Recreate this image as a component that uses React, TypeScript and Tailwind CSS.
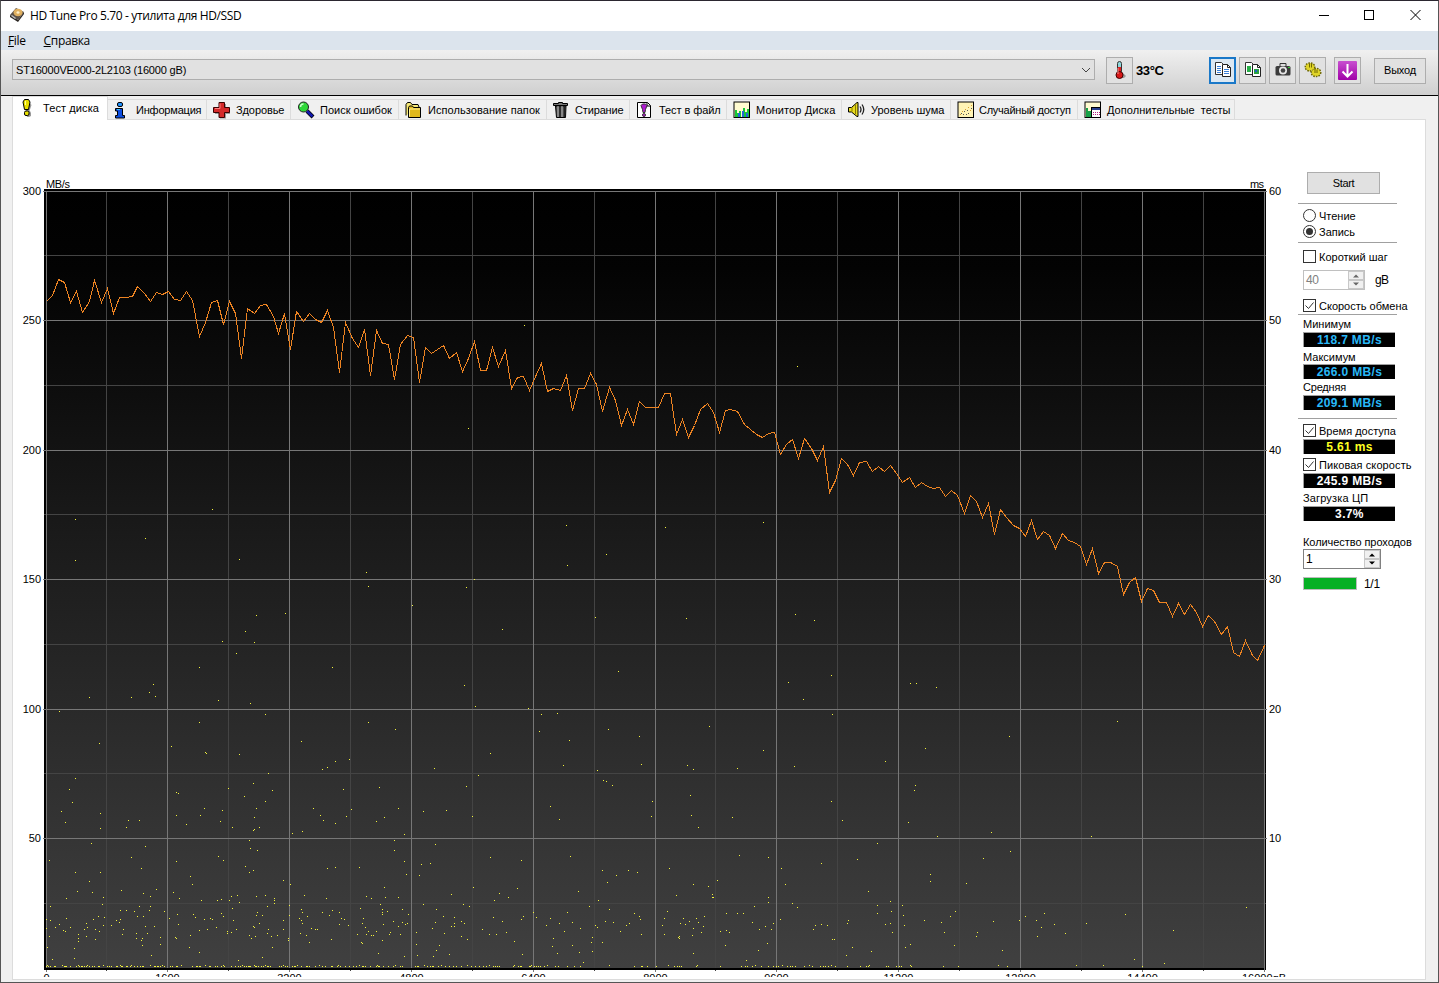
import type { ReactNode } from 'react';

type Point = [number, number];

// Samples are stored as flat x,y lists in thirds of a pixel, relative to a tile origin.
function tile(ox: number, oy: number, raw: number[]): Point[] {
  const points: Point[] = [];
  for (let i = 0; i < raw.length; i += 2) {
    points.push([ox + Math.floor(raw[i] / 3), oy + Math.floor(raw[i + 1] / 3)]);
  }
  return points;
}

const speed: Point[] = [
  ...tile(0, 170, [
    138, 394, 158, 376, 176, 328, 194, 337, 212, 397, 229, 365, 248, 428, 267, 394, 284, 331, 304, 397, 321, 356, 341,
    430, 358, 382, 378, 382, 396, 379, 412, 349, 432, 369, 451, 394, 469, 368, 487, 373, 504, 365, 522, 387, 541, 391,
    559, 365, 578, 391, 598, 498, 617, 457, 634, 398, 652, 391, 670, 463, 687, 395, 706, 431, 724, 565, 742, 416, 763,
    430, 781, 407, 799, 403, 819, 440, 836, 490, 853, 431, 871, 539, 889, 425, 911, 454, 928, 431, 947, 448, 965, 457,
    983, 421, 1000, 472, 1018, 606, 1037, 458, 1057, 505, 1075, 532, 1093, 479, 1111, 616, 1129, 482, 1147, 519, 1165,
    523, 1184, 628, 1202, 523, 1222, 496, 1240, 503,
  ]),
  ...tile(400, 310, [
    58, 217, 77, 113, 95, 130, 112, 118, 130, 107, 149, 144, 170, 127, 187, 184, 206, 145, 223, 95, 242, 181, 260, 181,
    278, 113, 295, 169, 316, 122, 335, 235, 351, 203, 370, 199, 389, 241, 406, 200, 424, 161, 443, 244, 461, 235, 481,
    241, 499, 197, 518, 301, 535, 235, 554, 235, 571, 190, 590, 223, 608, 304, 629, 232, 647, 271, 665, 346, 682, 298,
    701, 343, 718, 275, 736, 292, 775, 292, 793, 250, 811, 250, 830, 373, 848, 328, 866, 382, 884, 346, 902, 297, 923,
    280, 941, 308, 958, 367, 976, 302, 992, 297, 1012, 304, 1032, 344, 1068, 373, 1087, 382, 1105, 371, 1123, 367, 1141,
    433, 1159, 403, 1177, 388, 1195, 444, 1214, 385, 1233, 416, 1252, 450,
  ]),
  ...tile(820, 430, [
    10, 49, 29, 187, 46, 150, 64, 86, 82, 103, 100, 136, 119, 98, 139, 94, 157, 124, 175, 110, 193, 124, 211, 107, 230,
    130, 248, 157, 268, 143, 287, 172, 305, 157, 323, 169, 341, 175, 359, 172, 377, 199, 394, 181, 413, 196, 433, 250,
    451, 197, 469, 214, 487, 262, 505, 220, 523, 313, 541, 238, 560, 262, 580, 286, 598, 295, 616, 319, 634, 271, 652,
    328, 670, 304, 688, 316, 706, 355, 728, 310, 745, 331, 763, 337, 780, 350, 799, 403, 817, 356, 836, 430, 853, 397,
    871, 397, 892, 409, 910, 493, 928, 458, 946, 443, 965, 514, 982, 475, 1000, 482, 1018, 517, 1039, 517, 1058, 559,
    1076, 520, 1094, 553, 1111, 523, 1130, 546, 1148, 589, 1165, 557, 1184, 574, 1204, 613, 1222, 590, 1240, 667, 1258,
    679, 1276, 631, 1296, 677, 1312, 691, 1333, 647,
  ]),
];

const slowAccess: Point[] = [
  [524, 325], [797, 366], [468, 428], [212, 509], [75, 519], [145, 538], [75, 560], [239, 559], [566, 525], [567, 565],
  [606, 554], [665, 527], [763, 522], [366, 572], [368, 586], [474, 579], [466, 587], [412, 605], [256, 615], [285, 613],
  [245, 631], [254, 642], [222, 641], [236, 653], [199, 667], [332, 667], [502, 629], [595, 617], [686, 618], [795, 614],
  [814, 620], [618, 671], [464, 685], [153, 684], [149, 692], [155, 696], [89, 697], [131, 697], [218, 700], [250, 703],
  [265, 714], [59, 711], [475, 706], [528, 708], [541, 714], [557, 713], [199, 722], [368, 722], [395, 729], [709, 726],
  [539, 731], [569, 740], [608, 729], [639, 736], [301, 741], [99, 743], [171, 746], [205, 752], [206, 753], [239, 754],
  [490, 753], [763, 750], [788, 682], [831, 675], [803, 699], [832, 714], [910, 683], [916, 683], [936, 687], [925, 748],
  [1009, 736], [1117, 721], [885, 761], [349, 759], [335, 761], [434, 768], [322, 769], [327, 767], [268, 773], [75, 778],
  [69, 789], [597, 770], [603, 780], [606, 781], [612, 785], [687, 765], [693, 769], [737, 768], [641, 764], [794, 766],
  [563, 765], [466, 786], [478, 775], [228, 788], [253, 783], [272, 790], [343, 789], [244, 796], [176, 792], [178, 793],
  [915, 785], [914, 790], [379, 787], [690, 795],
];

const fastAccess: Point[] = [
  ...tile(0, 800, [
    217, 8, 184, 35, 196, 68, 301, 41, 301, 86, 385, 62, 418, 62, 379, 83, 274, 130, 436, 139, 394, 172, 148, 181, 424,
    205, 226, 217, 301, 217, 268, 244, 232, 274, 277, 278, 364, 271, 469, 268, 430, 280, 451, 290, 199, 295, 310, 292,
    307, 313, 151, 319, 418, 319, 451, 319, 361, 331, 379, 331, 403, 334, 448, 331, 493, 334, 139, 358, 151, 361, 199,
    355, 280, 358, 295, 349, 313, 352, 412, 349, 430, 349, 349, 361, 361, 358, 358, 367, 178, 373, 166, 382, 139, 385,
    211, 382, 190, 391, 196, 394, 259, 370, 262, 382, 253, 388, 286, 388, 298, 394, 310, 376, 334, 376, 370, 388, 367,
    403, 436, 379, 463, 379, 409, 400, 442, 400, 148, 409, 235, 403, 235, 415, 235, 424, 259, 409, 286, 418, 409, 415,
    427, 415, 424, 421, 481, 412, 481, 433, 427, 436, 142, 442, 223, 445, 223, 475, 454, 466, 157, 478, 529, 46, 559,
    73, 601, 46, 613, 25, 667, 31, 661, 64, 697, 82, 769, 25, 796, 4, 763, 52, 763, 88, 760, 91, 778, 82, 748, 121, 751,
    145, 772, 151, 655, 169, 670, 181, 529, 184, 736, 199, 760, 211, 748, 217, 571, 229, 577, 253, 520, 277, 538, 295,
    604, 301, 652, 301, 664, 298, 694, 289, 688, 301, 712, 286, 718, 307, 769, 289, 796, 286, 823, 295, 823, 301, 823,
    310, 802, 319, 697, 325, 772, 337, 769, 346, 787, 346, 664, 340, 670, 349, 580, 343, 586, 352, 532, 343, 508, 355,
    613, 358, 631, 355, 637, 358, 700, 361, 535, 373, 778, 370, 649, 382, 622, 388, 598, 391, 760, 379, 763, 382, 709,
    388, 682, 394, 682, 400, 694, 397, 571, 406, 526, 412, 529, 415, 568, 442, 598, 457, 748, 406, 754, 415, 766, 409,
    805, 388, 802, 400, 814, 409, 832, 406, 817, 442, 787, 472, 715, 481, 850, 241, 871, 253, 850, 361, 850, 388, 868,
    316, 868, 346, 865, 415, 865, 421, 877, 100, 907, 94, 940, 25, 961, 46, 970, 61, 1006, 70, 1039, 49, 1054, 28, 982,
    205, 1006, 202, 1078, 202, 913, 286, 979, 295, 904, 328, 904, 361, 907, 370, 907, 337, 898, 355, 922, 349, 967, 337,
    997, 331, 988, 346, 1018, 337, 1024, 355, 1033, 358, 1018, 373, 1045, 376, 934, 385, 946, 388, 952, 388, 901, 400,
    919, 406, 994, 418, 928, 427, 1195, 25, 1153, 52, 1129, 64, 1213, 103, 1183, 121, 1183, 151, 1213, 184, 1219, 223,
    1153, 262, 1099, 289, 1114, 295, 1156, 292, 1195, 292, 1141, 313, 1081, 325, 1147, 328, 1147, 337, 1147, 343, 1162,
    334, 1207, 328, 1225, 343, 1090, 355, 1087, 370, 1096, 382, 1105, 394, 1099, 403, 1072, 403, 1114, 406, 1120, 406,
    1129, 394, 1150, 373, 1180, 364, 1207, 367, 1216, 373, 1222, 370, 1195, 379, 1171, 397, 1168, 403, 1201, 403, 1147,
    421, 1084, 427, 1087, 430, 1135, 460, 1213, 469, 1270, 34, 1339, 31, 1417, 49, 1306, 133, 1264, 193, 1291, 190,
    1258, 226, 1420, 262, 1354, 283, 1270, 313, 1390, 313, 1408, 319, 1309, 328, 1330, 349, 1363, 352, 1306, 367, 1363,
    370, 1363, 379, 1354, 379, 1384, 364, 1393, 370, 1297, 385, 1249, 397, 1333, 400, 1384, 409, 1402, 418, 1249, 433,
    1318, 436, 1309, 451, 1252, 466, 1300, 469, 1348, 463,
  ]),
  ...tile(480, 800, [
    211, 19, 238, 58, 517, 4, 514, 49, 634, 46, 655, 82, 757, 52, 1054, 4, 1087, 61, 1285, 67, 1372, 109, 1192, 130, 31,
    172, 124, 181, 271, 169, 778, 166, 865, 172, 1132, 178, 1024, 190, 568, 205, 904, 205, 367, 211, 445, 211, 472, 217,
    409, 226, 382, 247, 712, 241, 640, 253, 685, 259, 916, 253, 1351, 223, 1351, 244, 112, 265, 58, 280, 85, 292, 43,
    301, 295, 274, 1165, 274, 355, 301, 589, 286, 697, 283, 697, 292, 700, 292, 865, 292, 865, 307, 937, 310, 952, 322,
    1231, 304, 1192, 316, 1267, 316, 328, 319, 388, 328, 823, 319, 562, 334, 463, 340, 739, 340, 772, 340, 790, 340, 160,
    337, 262, 337, 40, 352, 130, 349, 124, 358, 169, 352, 211, 355, 67, 364, 199, 376, 238, 370, 277, 367, 7, 388, 28,
    403, 49, 403, 79, 397, 253, 394, 301, 385, 346, 376, 352, 382, 376, 364, 400, 367, 439, 376, 448, 370, 421, 394, 478,
    349, 481, 358, 484, 403, 103, 424, 220, 415, 217, 439, 232, 460, 277, 436, 298, 457, 337, 412, 334, 427, 337, 454,
    367, 427, 127, 463, 553, 355, 547, 376, 553, 403, 610, 355, 601, 370, 616, 373, 628, 364, 649, 355, 655, 367, 673,
    349, 670, 379, 640, 385, 664, 397, 637, 406, 598, 409, 595, 412, 598, 415, 640, 460, 721, 394, 739, 391, 748, 397,
    736, 436, 817, 367, 838, 388, 856, 379, 874, 388, 880, 370, 901, 358, 862, 430, 835, 451, 799, 481, 1006, 376, 1000,
    388, 1024, 373, 1042, 376, 1057, 418, 1063, 418, 1105, 361, 1102, 370, 1117, 442, 1099, 466, 1174, 454, 1192, 340,
    1234, 334, 1216, 373, 1231, 370, 1237, 397, 1270, 346, 1273, 376, 1276, 442, 1291, 433, 1333, 361, 1384, 367, 1393,
    397, 1411, 349, 1426, 334, 1423, 436, 310, 487,
  ]),
  ...tile(960, 800, [
    94, 97, 394, 109, 151, 154, 70, 175, 19, 250, 859, 322, 100, 364, 178, 361, 196, 349, 229, 361, 253, 340, 244, 382,
    232, 409, 283, 373, 316, 400, 379, 370, 496, 343, 52, 397, 49, 409, 127, 451, 640, 391, 523, 478, 613, 490, 115, 496,
    142, 499, 349, 496, 430, 496, 547, 499,
  ]),
];

// Cached reads and writes that sit on the baseline of the plot.
const baseline = [
  46, 47, 48, 48, 50, 54, 55, 62, 64, 65, 66, 70, 76, 78, 79, 81, 82, 84, 86, 87, 89, 92, 94, 98, 99, 103, 107, 109, 111,
  116, 117, 120, 121, 122, 126, 127, 130, 131, 134, 137, 140, 142, 143, 150, 154, 155, 157, 158, 160, 162, 164, 170, 172,
  176, 177, 181, 192, 196, 197, 199, 200, 205, 209, 210, 215, 217, 221, 223, 224, 231, 235, 238, 240, 242, 244, 246, 248,
  249, 250, 254, 255, 256, 258, 261, 263, 265, 267, 268, 270, 279, 281, 283, 285, 287, 292, 294, 295, 297, 301, 306, 307,
  309, 315, 319, 322, 325, 331, 332, 337, 338, 340, 345, 349, 353, 356, 359, 362, 363, 365, 370, 376, 377, 378, 379, 383,
  388, 393, 395, 400, 402, 415, 417, 418, 424, 427, 430, 432, 433, 438, 441, 445, 449, 453, 456, 461, 467, 471, 475, 479,
  483, 486, 489, 493, 495, 497, 499, 513, 514, 518, 520, 521, 529, 530, 531, 534, 536, 538, 540, 544, 547, 555, 558, 567,
  574, 580, 609, 634, 641, 642, 647, 656, 668, 674, 677, 679, 681, 696, 697, 720, 741, 745, 747, 752, 755, 761, 768, 773,
  776, 778, 782, 787, 790, 792, 795, 804, 809, 812, 820, 823, 825, 828, 831, 835, 847, 860, 866, 868, 869, 886, 888, 896,
  899, 901, 910, 911, 943, 958,
];

const accessPath = [...slowAccess, ...fastAccess, ...baseline.map((x, i): Point => [x, i % 6 === 1 ? 965 : 966])]
  .map(([x, y]) => `M${x} ${y}h1v1h-1z`)
  .join('');

const majorX = [46, 167, 289, 411, 533, 655, 776, 898, 1020, 1142, 1264];
const minorX = [106, 228, 350, 472, 594, 715, 837, 959, 1081, 1203];
const majorY = [191, 320, 450, 579, 709, 838];
const minorY = [255, 385, 514, 644, 773, 903];

function Chart() {
  return (
    <svg
      width="1285"
      height="857"
      viewBox="13 120 1285 857"
      className="block shrink-0 font-['Liberation_Sans',sans-serif] text-[11px]"
      shapeRendering="crispEdges"
    >
      <defs>
        <linearGradient id="plot" x1="0" y1="0" x2="0" y2="1">
          <stop offset="0" stopColor="#000" />
          <stop offset="0.1" stopColor="#030303" />
          <stop offset="1" stopColor="#404040" />
        </linearGradient>
      </defs>
      <rect x="44" y="189" width="1222" height="781" fill="#000" />
      <rect x="46" y="191" width="1218" height="777" fill="url(#plot)" />
      {minorX.map((x) => (
        <rect key={x} x={x} y="191" width="1" height="780" fill="#444" />
      ))}
      {minorY.map((y) => (
        <rect key={y} x="44" y={y} width="1222" height="1" fill="#444" />
      ))}
      {majorX.map((x) => (
        <rect key={x} x={x} y="191" width="1" height="781" fill="#777" />
      ))}
      {majorY.map((y) => (
        <rect key={y} x="43" y={y} width="1224" height="1" fill="#777" />
      ))}
      <path d="M46 968h1218v2H46z" fill="#000" />
      <path d={accessPath} fill="#f4f43c" />
      <polyline
        points={speed.map(([x, y]) => `${x + 0.5},${y + 0.5}`).join(' ')}
        fill="none"
        stroke="#ee8422"
        strokeWidth="1"
      />
      <g fill="#000">
        <text x="46" y="188" textLength="24">MB/s</text>
        <text x="1264" y="188" textAnchor="end" textLength="14">ms</text>
        {majorY.map((y, i) => (
          <g key={y}>
            <text x="41" y={y + 4} textAnchor="end">{300 - i * 50}</text>
            <text x="1269" y={y + 4}>{60 - i * 10}</text>
          </g>
        ))}
        {majorX.slice(0, 10).map((x, i) => (
          <text key={x} x={x + 0.5} y="982" textAnchor="middle">{i * 1600}</text>
        ))}
        <text x="1242" y="982">16000gB</text>
      </g>
    </svg>
  );
}

type IconProps = { children: ReactNode; size?: number };

function Icon({ children, size = 18 }: IconProps) {
  return (
    <svg width={size} height={size} viewBox="0 0 18 18" className="block shrink-0">
      {children}
    </svg>
  );
}

const icons = {
  test: (
    <Icon>
      <path d="M4 4h5l1.500 2-2 6H9l1 2v3l-2 1H6z" fill="#999" />
      <path d="M3.500 .500h4l1.500 2.500-1.500 7.500H3.500l-1.500-7.500z" fill="#e8e000" stroke="#000" />
      <path d="M4.500 2v4" stroke="#ff9" />
      <rect x="3.500" y="12" width="4.500" height="4.500" rx="1.500" fill="#e8e000" stroke="#000" />
    </Icon>
  ),
  info: (
    <Icon>
      <rect x="3.500" y="1.500" width="5" height="4" rx="1.500" fill="#1e90ff" stroke="#000" />
      <path d="M1.500 7.500h7v7h2v2.500h-9v-2.500h2v-4.500h-2z" fill="#0a4be0" stroke="#000" />
      <path d="M3 8.500h3" stroke="#39c0ff" />
    </Icon>
  ),
  health: (
    <Icon>
      <path d="M7 3h6v5h4v5h-4v4.500H7V13H2V8h5z" fill="#999" />
      <path d="M6 1.500h5.500V6.500h5V11.500h-5V16.500H6V11.500H.500V6.500H6z" fill="#d42a2a" stroke="#3b0000" />
      <path d="M7 2.500v5h-5" fill="none" stroke="#ff8080" />
    </Icon>
  ),
  search: (
    <Icon>
      <path d="M10 10l6 6" stroke="#000" strokeWidth="4" />
      <path d="M10 10l5.500 5.500" stroke="#1018b0" strokeWidth="2.500" />
      <circle cx="6.500" cy="6" r="5" fill="#2fd838" stroke="#222" />
      <path d="M3.500 6a3 3 0 013-3" fill="none" stroke="#c8ffc8" strokeWidth="1.500" />
    </Icon>
  ),
  folder: (
    <Icon>
      <path d="M1 14.500v-11l1.500-2h3l1.500 2h6l1 2.500" fill="#f5e878" stroke="#000" />
      <path d="M3.500 16.500V6.500l1-1.500h3l1 1.500h7v10z" fill="#e0b81c" stroke="#000" />
      <path d="M4.500 15.500V8h10.500" fill="none" stroke="#fff39a" />
    </Icon>
  ),
  trash: (
    <Icon>
      <path d="M2.500 5h10.500l-.500 11.500h-9z" fill="#555" stroke="#000" />
      <path d="M5 5v11M9 5v11" stroke="#bbb" />
      <path d="M7 5v11M11.500 5v11" stroke="#222" strokeWidth="1.500" />
      <path d="M.500 2.500h5v-1h4v1h5v2h-14z" fill="#777" stroke="#000" />
    </Icon>
  ),
  file: (
    <Icon>
      <path d="M1.500 1.500h10l3 3v12h-13z" fill="#fff" stroke="#000" />
      <path d="M11 1.500v3.500h3.500" fill="none" stroke="#000" />
      <path d="M5 4.500l1.500-1.500h3l1.500 1.500-1.500 4-.500 3h-2l-.500-3z" fill="#b01bd0" stroke="#333" />
      <circle cx="8" cy="14" r="1.500" fill="#b01bd0" stroke="#333" />
    </Icon>
  ),
  monitor: (
    <Icon>
      <rect x="1" y="1" width="15.500" height="15.500" fill="#fffbd0" stroke="#000" />
      <path d="M2 9h2v3h2v-2h2v6H2zM10 7h2v4h2V8h2v8h-6z" fill="#18c838" />
      <path d="M5 12h2v4H5zM9 10h2v6H9zM13 12h2v4h-2z" fill="#2468d8" />
    </Icon>
  ),
  sound: (
    <Icon>
      <path d="M.500 6.500h3l5.500-5h1v14H9l-5.500-4.500h-3z" fill="#e8dc20" stroke="#000" />
      <path d="M4 6.500v4M7.500 4v9" stroke="#8a7a00" />
      <path d="M12 5.500q2 3 0 6M14 3.500q3.500 5 0 10" fill="none" stroke="#222" strokeWidth="1.300" />
    </Icon>
  ),
  random: (
    <Icon>
      <rect x="1" y="1" width="15.500" height="15.500" fill="#fff3b4" stroke="#000" />
      <path d="M3 13h1v1H3zM5 10h1v1H5zM8 8h1v1H8zM11 6h1v1h-1zM14 4h1v1h-1zM13 9h1v1h-1z" fill="#d8a030" />
      <path d="M4 12h1v1H4zM7 10h1v1H7zM10 9h1v1h-1zM11 12h1v1h-1zM14 7h1v1h-1zM6 13h1v1H6zM9 13h1v1H9z" fill="#555" />
    </Icon>
  ),
  extra: (
    <Icon>
      <rect x="1" y="1" width="15.500" height="15.500" fill="#fffbd0" stroke="#000" />
      <path d="M2 7h2v3h3v6H2z" fill="#18a048" />
      <rect x="7.500" y="6.500" width="9" height="10" fill="#fff" stroke="#000" />
      <path d="M8 7h8v2H8z" fill="#28408c" />
      <path
        d="M9 11h1v1H9zM11 11h1v1h-1zM13 11h1v1h-1zM9 13h1v1H9zM11 13h1v1h-1zM13 13h1v1h-1zM15 11h1v1h-1zM15 13h1v1h-1z"
        fill="#b02080"
      />
    </Icon>
  ),
};

type Tab = { icon: ReactNode; label: string; className: string };

const tabs: Tab[] = [
  { icon: icons.info, label: 'Информация', className: 'w-[99px] gap-[4px] tracking-[-0.2px]' },
  { icon: icons.health, label: 'Здоровье', className: 'w-[84px] gap-[5px] tracking-[-0.1px]' },
  { icon: icons.search, label: 'Поиск ошибок', className: 'w-[108px] gap-[5px]' },
  { icon: icons.folder, label: 'Использование папок', className: 'w-[148px] gap-[5px] tracking-[0.07px]' },
  { icon: icons.trash, label: 'Стирание', className: 'w-[83px] gap-[4px] tracking-[-0.15px]' },
  { icon: icons.file, label: 'Тест в файл', className: 'w-[97px] gap-[5px] tracking-[-0.07px]' },
  { icon: icons.monitor, label: 'Монитор Диска', className: 'w-[115px] gap-[5px] tracking-[0.1px]' },
  { icon: icons.sound, label: 'Уровень шума', className: 'w-[109px] gap-[5px]' },
  { icon: icons.random, label: 'Случайный доступ', className: 'w-[127px] gap-[4px] tracking-[-0.25px]' },
  { icon: icons.extra, label: 'Дополнительные\u00a0 тесты', className: 'w-[157px] gap-[5px] tracking-[0.04px]' },
];

function TabBar() {
  return (
    <div className="flex h-[24px] items-end pl-[12px]">
      <div className="relative z-10 flex h-[24px] w-[96px] items-center border border-b-0 border-[#dcdcdc] bg-white pl-[8px]">
        <div className="-mt-[2px]">{icons.test}</div>
        <span className="ml-[4px] tracking-[0.1px] whitespace-nowrap">Тест диска</span>
      </div>
      {tabs.map((tab) => (
        <div
          key={tab.label}
          className={`flex h-[21px] items-center border-t border-r border-[#dcdcdc] pl-[6px] ${tab.className}`}
        >
          <div className="-mt-px">{tab.icon}</div>
          <span className="whitespace-nowrap">{tab.label}</span>
        </div>
      ))}
    </div>
  );
}

function TitleBar() {
  return (
    <div className="flex h-[30px] items-center bg-white font-['Open_Sans','Noto_Sans',sans-serif] text-[12px]">
      <svg width="16" height="16" viewBox="0 0 16 16" className="-mt-[2px] ml-[8px] block">
        <path d="M1 8l6-7 8 4-6 8z" fill="#5a5048" />
        <path d="M1 8l8 5 6-8v2l-6 8-8-5z" fill="#2a2622" />
        <ellipse cx="9" cy="5.500" rx="4.500" ry="3.800" fill="#e0b060" />
        <ellipse cx="9" cy="5.500" rx="1.500" ry="1.200" fill="#fff0c8" />
        <path d="M3 8l4 3-1 1-4-3z" fill="#bbb" />
      </svg>
      <span className="ml-[5px] tracking-[-0.36px]">HD Tune Pro 5.70 - утилита для HD/SSD</span>
      <svg width="110" height="12" viewBox="0 0 110 12" className="-mt-[2px] mr-[14px] ml-auto block" fill="none" stroke="#000">
        <path d="M5 6.500h10" />
        <rect x="50.500" y="1.500" width="9" height="9" />
        <path d="M96.500 1l10 10M106.500 1l-10 10" />
      </svg>
    </div>
  );
}

function ToolButton({ children, active }: { children: ReactNode; active?: boolean }) {
  return (
    <div
      className={
        active
          ? 'flex size-[27px] items-center justify-center border-2 border-[#1a78c8] bg-[#dce8f2]'
          : 'flex size-[27px] items-center justify-center border border-[#adadad] bg-[#e1e1e1]'
      }
    >
      {children}
    </div>
  );
}

function Toolbar() {
  return (
    <div className="flex h-[46px] items-start border-b border-black bg-linear-to-b from-[#f0f0f0] to-[#cfcfcf] pl-[11px]">
      <div className="mt-[9px] flex h-[21px] w-[1083px] items-center border border-[#adadad] bg-[#e1e1e1] pl-[3px]">
        <span className="mt-px tracking-[-0.18px]">ST16000VE000-2L2103 (16000 gB)</span>
        <svg width="10" height="6" viewBox="0 0 10 6" className="mr-[3px] ml-auto block" fill="none" stroke="#444">
          <path d="M1 1l4 4 4-4" />
        </svg>
      </div>
      <div className="mt-[7px] ml-[11px] flex items-center">
        <ToolButton>
          <svg width="14" height="20" viewBox="0 0 14 20" className="-mt-[2px]">
            <path d="M7 18h4l2-2-3-3z" fill="#999" />
            <rect x="4.500" y="1.500" width="4" height="12" rx="2" fill="#8fd8dc" stroke="#333" />
            <path d="M5 7h3v6H5z" fill="#e02020" />
            <circle cx="6.500" cy="15" r="3.500" fill="#d81818" stroke="#400" />
            <path d="M5 14v-6" stroke="#ff9090" />
          </svg>
        </ToolButton>
        <span className="ml-[3px] w-[73px] text-[13px] font-bold tracking-[-0.4px]">33°C</span>
        <ToolButton active>
          <svg width="18" height="18" viewBox="0 0 18 18" className="-mt-[2px]">
            <path d="M1.500 1.500h6l2 2v10h-8z" fill="#fff" stroke="#333" />
            <path d="M3 5.500h4M3 7.500h4M3 9.500h4M3 11.500h4" stroke="#3a80d8" />
            <path d="M8.500 3.500h5l3 3v9h-8z" fill="#fff" stroke="#222" />
            <path d="M13.500 3.500v3h3" fill="none" stroke="#222" />
            <path d="M10 8.500h5M10 10.500h5M10 12.500h5" stroke="#3a80d8" />
          </svg>
        </ToolButton>
        <div className="ml-[3px]">
          <ToolButton>
            <svg width="18" height="18" viewBox="0 0 18 18" className="-mt-[2px]">
              <path d="M1.500 1.500h6l2 2v10h-8z" fill="#fff" stroke="#333" />
              <path d="M3 5h4v6H3z" fill="#28b048" />
              <path d="M8.500 3.500h5l3 3v9h-8z" fill="#fff" stroke="#222" />
              <path d="M13.500 3.500v3h3" fill="none" stroke="#222" />
              <path d="M10 8h5v5h-5z" fill="#28a040" />
              <path d="M11 9h2v2h-2z" fill="#2060c8" />
            </svg>
          </ToolButton>
        </div>
        <div className="ml-[3px]">
          <ToolButton>
            <svg width="18" height="18" viewBox="0 0 18 18" className="-mt-[2px]">
              <path d="M6 2.500h6v3H6z" fill="#ddd" stroke="#333" />
              <rect x="1.500" y="5" width="15" height="9.500" rx="1.500" fill="#3c3c3c" />
              <circle cx="9" cy="9.500" r="4" fill="#e8e8e8" />
              <circle cx="9" cy="9.500" r="2.300" fill="#444" />
              <path d="M14 6h2v1h-2z" fill="#3c3" />
            </svg>
          </ToolButton>
        </div>
        <div className="ml-[3px]">
          <ToolButton>
            <svg width="18" height="18" viewBox="0 0 18 18" className="-mt-[2px]" stroke="#6e6800">
              <ellipse cx="6" cy="6" rx="4.500" ry="3.800" fill="#d8cc20" strokeWidth="2" strokeDasharray="1.500 1" />
              <ellipse cx="12" cy="11.500" rx="4.500" ry="3.800" fill="#d8cc20" strokeWidth="2" strokeDasharray="1.500 1" />
              <ellipse cx="6" cy="6" rx="4" ry="3.200" fill="#e0d428" stroke="none" />
              <ellipse cx="12" cy="11.500" rx="4" ry="3.200" fill="#e0d428" stroke="none" />
              <path d="M5.500 2.500v4M7.500 3v3.500M11 8v4M13 9v3" strokeWidth="1" />
            </svg>
          </ToolButton>
        </div>
        <div className="ml-[8px]">
          <ToolButton>
            <svg width="19" height="19" viewBox="0 0 19 19" className="-mt-px">
              <defs>
                <linearGradient id="save" x1="0" y1="0" x2="0" y2="1">
                  <stop offset="0" stopColor="#c850d0" />
                  <stop offset="1" stopColor="#a000a8" />
                </linearGradient>
              </defs>
              <rect width="19" height="19" rx="1" fill="url(#save)" />
              <path d="M9.500 3v12M4.500 10.500l5 5 5-5" fill="none" stroke="#fff" strokeWidth="2" />
            </svg>
          </ToolButton>
        </div>
        <div className="ml-[13px] flex h-[26px] w-[52px] items-center justify-center border border-[#adadad] bg-[#e1e1e1] tracking-[-0.2px]">
          Выход
        </div>
      </div>
    </div>
  );
}

function Radio({ label, checked }: { label: string; checked?: boolean }) {
  return (
    <div className="ml-[5px] flex h-[16px] items-center">
      <div className="-mt-px flex size-[13px] items-center justify-center rounded-full border border-[#333] bg-white">
        {checked && <div className="size-[7px] rounded-full bg-[#333]" />}
      </div>
      <span className="ml-[3px]">{label}</span>
    </div>
  );
}

function Check({ label, checked }: { label: string; checked?: boolean }) {
  return (
    <div className="ml-[5px] flex h-[14px] items-center whitespace-nowrap">
      <svg width="13" height="13" viewBox="0 0 13 13" className="-mt-px block shrink-0" fill="#fff" stroke="#333">
        <rect x="0.500" y="0.500" width="12" height="12" />
        {checked && <path d="M2.500 6.500l3 3 5-6" fill="none" />}
      </svg>
      <span className="ml-[3px]">{label}</span>
    </div>
  );
}

function Value({ children, className }: { children: ReactNode; className: string }) {
  return (
    <div
      className={`ml-[5px] flex h-[15px] w-[92px] items-center justify-center border-t border-l border-[#a0a0a0] bg-black text-[12px] font-bold tracking-[0.35px] ${className}`}
    >
      {children}
    </div>
  );
}

function Spinner({ value, className, disabled }: { value: string; className: string; disabled?: boolean }) {
  return (
    <div
      className={`flex h-[20px] items-center border bg-white ${disabled ? 'border-[#c0c0c0] text-[#808080]' : 'border-[#808080]'} ${className}`}
    >
      <span className="ml-[2px] text-[12px] tracking-[-0.3px]">{value}</span>
      <svg width="16" height="18" viewBox="0 0 16 18" className="ml-auto block">
        <rect x="0.500" y="0.500" width="15" height="8" fill="#f0f0f0" stroke="#c8c8c8" />
        <rect x="0.500" y="9.500" width="15" height="8" fill="#f0f0f0" stroke="#c8c8c8" />
        <path d="M5 6.500l3-3 3 3zM5 11.500l3 3 3-3z" fill={disabled ? '#666' : '#000'} />
      </svg>
    </div>
  );
}

function Sidebar() {
  return (
    <div className="w-[122px] shrink-0 pt-[52px]">
      <div className="ml-[9px] flex h-[22px] w-[73px] items-center justify-center border border-[#adadad] bg-[#e1e1e1] text-[11px] tracking-[-0.3px]">
        Start
      </div>
      <div className="mt-[9px] mb-[4px] h-px w-[99px] bg-[#a0a0a0]" />
      <Radio label="Чтение" />
      <Radio label="Запись" checked />
      <div className="mt-[2px] mb-[7px] h-px w-[99px] bg-[#a0a0a0]" />
      <Check label="Короткий шаг" />
      <div className="mt-[6px] mb-[9px] ml-[5px] flex items-center">
        <Spinner value="40" disabled className="w-[62px]" />
        <span className="ml-[10px] text-[12px] tracking-[-0.7px]">gB</span>
      </div>
      <Check label="Скорость обмена" checked />
      <div className="mt-px mb-[2px] h-px w-[99px] bg-[#a0a0a0]" />
      <div className="mb-px ml-[5px] flex h-[14px] items-center">Минимум</div>
      <Value className="text-[#28b8f8]">118.7 MB/s</Value>
      <div className="mt-[3px] ml-[5px] flex h-[14px] items-center">Максимум</div>
      <Value className="text-[#28b8f8]">266.0 MB/s</Value>
      <div className="my-px ml-[5px] flex h-[14px] items-center tracking-[-0.2px]">Средняя</div>
      <Value className="text-[#28b8f8]">209.1 MB/s</Value>
      <div className="mt-[8px] mb-[5px] h-px w-[99px] bg-[#a0a0a0]" />
      <Check label="Время доступа" checked />
      <Value className="mt-px text-[#ffff20]">5.61 ms</Value>
      <div className="mt-[4px] tracking-[0.1px]">
        <Check label="Пиковая скорость" checked />
      </div>
      <Value className="mt-px text-white">245.9 MB/s</Value>
      <div className="mt-[3px] mb-px ml-[5px] flex h-[14px] items-center tracking-[0.15px]">Загрузка ЦП</div>
      <Value className="text-white">3.7%</Value>
      <div className="mt-[14px] ml-[5px] flex h-[14px] items-center tracking-[-0.06px] whitespace-nowrap">
        Количество проходов
      </div>
      <Spinner value="1" className="ml-[5px] w-[78px]" />
      <div className="mt-[8px] ml-[5px] flex h-[13px] items-center">
        <div className="h-[13px] w-[54px] border border-[#bcbcbc] bg-[#06b025]" />
        <span className="ml-[7px] text-[12px] tracking-[-0.3px]">1/1</span>
      </div>
    </div>
  );
}

export default function App() {
  return (
    <div className="flex h-[983px] w-[1439px] flex-col overflow-hidden border border-[#555] border-t-[#2b2730] bg-[#f0f0f0] font-['Liberation_Sans',sans-serif] text-[11px] leading-none text-black">
      <TitleBar />
      <div className="flex h-[19px] items-center bg-[#dce4ed] pl-[7px] font-['Open_Sans','Noto_Sans',sans-serif] text-[12px] tracking-[-0.35px]">
        <span><u>F</u>ile</span>
        <span className="ml-[18px]"><u>С</u>правка</span>
      </div>
      <Toolbar />
      <div className="-ml-px h-[24px]">
        <TabBar />
      </div>
      <div className="-mt-px ml-[11px] flex h-[861px] w-[1414px] shrink-0 overflow-hidden border border-[#dcdcdc] bg-white">
        <Chart />
        <Sidebar />
      </div>
    </div>
  );
}
